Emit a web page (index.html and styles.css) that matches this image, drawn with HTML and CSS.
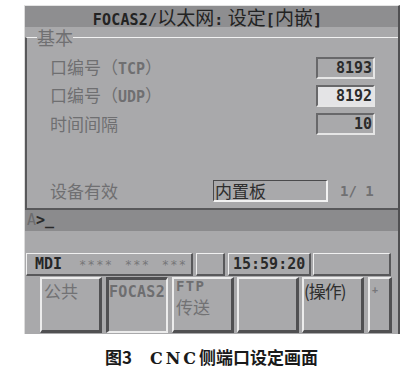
FILE: index.html
```html
<!DOCTYPE html>
<html lang="zh">
<head>
<meta charset="utf-8">
<title>FOCAS2 以太网设定</title>
<link rel="stylesheet" href="styles.css">
</head>
<body>
<div class="screen">
  <div class="titlebar"><span class="t-lat">FOCAS2/</span>以太网<span class="t-lat">:</span> 设定<span class="t-lat">[</span>内嵌<span class="t-lat">]</span></div>
  <fieldset class="basic">
    <legend>基本</legend>
    <div class="row r1"><span class="lbl">口编号（<b class="lat">TCP</b>）</span><span class="val">8193</span></div>
    <div class="row"><span class="lbl">口编号（<b class="lat">UDP</b>）</span><span class="val hi">8192</span></div>
    <div class="row"><span class="lbl">时间间隔</span><span class="val">10</span></div>
    <div class="row dev"><span class="lbl dlbl">设备有效</span><span class="devbox">内置板</span><span class="page">1/ 1</span></div>
  </fieldset>
  <div class="cmd"><span class="a">A</span>&gt;_</div>
  <div class="status">
    <div class="sb s1"><b class="mdi">MDI</b><span class="stars">**** *** ***</span></div>
    <div class="sb s2"></div>
    <div class="sb s3">15:59:20</div>
    <div class="sb s4"></div>
  </div>
  <div class="keys">
    <div class="key">公共</div>
    <div class="key pressed"><span class="klat">FOCAS2</span></div>
    <div class="key two"><span class="ftp">FTP</span><span class="kl2">传送</span></div>
    <div class="key k4"></div>
    <div class="key k5 dark">(操作)</div>
    <div class="key k6"><span class="plus">+</span></div>
  </div>
</div>
<p class="caption">图3<span class="sp"></span><span class="cl">CNC</span>侧端口设定画面</p>
</body>
</html>
```
FILE: styles.css
```css
html, body {
  margin: 0;
  padding: 0;
  background: #ffffff;
}

body {
  width: 419px;
  font-family: "Noto Sans CJK SC", sans-serif;
}

.screen {
  margin: 5px 0 0 24px;
  width: 376px;
  box-sizing: border-box;
  background: #a9a9ab;
  border-top: 1px solid #e4e4e4;
  border-left: 1px solid #dcdcdc;
  border-right: 2px solid #505052;
  padding-bottom: 1px;
  display: flex;
  flex-direction: column;
}

.titlebar {
  height: 21px;
  background: #8e8e90;
  text-align: center;
  font-size: 19px;
  line-height: 21px;
  color: #232323;
  white-space: pre;
  padding-right: 8px;
}

.t-lat {
  font-family: "DejaVu Sans Mono", monospace;
  font-size: 15px;
  font-weight: bold;
  letter-spacing: 0.2px;
}

.basic {
  margin: 0;
  padding: 0 0 6px 0;
  min-width: 0;
  border: none;
  border-top: 1px solid #f2f2f2;
  border-left: 2px solid #58585a;
  border-bottom: 2px solid #58585a;
}

.basic legend {
  padding: 0;
  margin-left: 10px;
  font-size: 18px;
  line-height: 20px;
  color: #707072;
}

.row {
  display: flex;
  align-items: center;
  height: 22px;
  margin: 6px 23px 0 23px;
}

.row.r1 {
  margin-top: 10px;
}

.row.dev {
  margin-top: 45px;
}

.lbl {
  flex: 1;
  font-size: 17px;
  line-height: 22px;
  color: #6f6f71;
  white-space: nowrap;
}

.lat {
  font-family: "DejaVu Sans Mono", monospace;
  font-size: 15px;
  font-weight: bold;
}

.val {
  width: 59px;
  height: 22px;
  box-sizing: border-box;
  border-top: 2px solid #68686a;
  border-left: 2px solid #68686a;
  border-bottom: 2px solid #e6e6e6;
  border-right: 2px solid #e6e6e6;
  padding-right: 1px;
  text-align: right;
  font-family: "DejaVu Sans Mono", monospace;
  font-weight: bold;
  font-size: 15px;
  line-height: 18px;
  color: #2b2b2b;
}

.val.hi {
  background: #e4e4e6;
}

.dlbl {
  flex: 0 0 163px;
}

.devbox {
  width: 115px;
  height: 22px;
  box-sizing: border-box;
  border-top: 1px solid #4a4a4c;
  border-left: 1px solid #4a4a4c;
  border-bottom: 2px solid #f2f2f2;
  border-right: 2px solid #f2f2f2;
  font-size: 17px;
  line-height: 19px;
  color: #2e2e2e;
  padding-left: 1px;
}

.page {
  margin-left: 12px;
  font-family: "DejaVu Sans Mono", monospace;
  font-weight: bold;
  font-size: 14px;
  color: #707072;
  white-space: pre;
}

.cmd {
  height: 21px;
  background: #8b8b8d;
  padding-left: 2px;
  font-family: "DejaVu Sans Mono", monospace;
  font-weight: bold;
  font-size: 15px;
  line-height: 21px;
  color: #2a2a2a;
}

.cmd .a {
  color: #6c6c6e;
  font-weight: normal;
}

.status {
  display: flex;
  height: 23px;
  margin: 22px 0 0 1px;
}

.sb {
  box-sizing: border-box;
  height: 23px;
  border-top: 1px solid #f0f0f0;
  border-left: 1px solid #f0f0f0;
  border-bottom: 2px solid #58585a;
  border-right: 2px solid #58585a;
  font-family: "DejaVu Sans Mono", monospace;
  font-size: 15px;
  line-height: 20px;
  white-space: pre;
}

.s1 { width: 167px; padding-left: 8px; }
.s2 { width: 29px; margin-left: 3px; }
.s3 { width: 83px; margin-left: 3px; padding-left: 4px; font-weight: bold; color: #2a2a2a; }
.s4 { width: 78px; margin-left: 2px; }

.mdi {
  color: #252525;
}

.stars {
  margin-left: 17px;
  font-size: 12px;
  color: #767678;
  letter-spacing: 1.3px;
  word-spacing: 3px;
}

.keys {
  display: flex;
  height: 56px;
  margin: 1px 0 0 15px;
}

.key {
  box-sizing: border-box;
  width: 62px;
  height: 56px;
  margin-left: 4px;
  padding: 3px 0 0 2px;
  border-top: 2px solid #ececec;
  border-left: 2px solid #ececec;
  border-right: 3px solid #505052;
  border-bottom: 3px solid #505052;
  font-size: 17px;
  line-height: 18px;
  color: #727274;
}

.key:first-child {
  margin-left: 0;
}

.key.k4,
.key.k5 {
  margin-left: 3px;
}

.key.k6 {
  width: 24px;
  margin-left: 4px;
}

.key.pressed {
  border-top: 3px solid #505052;
  border-left: 3px solid #505052;
  border-right: 2px solid #ececec;
  border-bottom: 2px solid #ececec;
  padding: 1px 0 0 0;
}

.key.two {
  padding-top: 0;
}

.key.dark {
  color: #2e2e2e;
  padding-left: 0;
  letter-spacing: -1px;
}

.klat {
  font-family: "DejaVu Sans Mono", monospace;
  font-weight: bold;
  font-size: 15px;
  line-height: 16px;
  letter-spacing: 0.3px;
  color: #6e6e70;
}

.key.two .ftp {
  display: block;
  height: 13px;
  margin-top: 1px;
  font-family: "DejaVu Sans Mono", monospace;
  font-weight: bold;
  font-size: 14px;
  line-height: 13px;
  letter-spacing: 1.3px;
  color: #6e6e70;
}

.key.two .kl2 {
  display: block;
  height: 20px;
  margin-top: 4px;
  line-height: 20px;
}

.plus {
  display: block;
  font-family: "DejaVu Sans Mono", monospace;
  font-size: 10px;
  font-weight: bold;
  line-height: 12px;
  padding-top: 2px;
  color: #77777a;
}

.caption {
  margin: 13px 0 0 0;
  text-align: center;
  font-size: 17px;
  line-height: 20px;
  font-weight: 700;
  color: #1a1a1a;
  padding-left: 4px;
}

.caption .sp {
  display: inline-block;
  width: 18px;
}

.caption .cl {
  font-family: "DejaVu Serif", serif;
  font-weight: bold;
  font-size: 16px;
  letter-spacing: 3px;
}
```
